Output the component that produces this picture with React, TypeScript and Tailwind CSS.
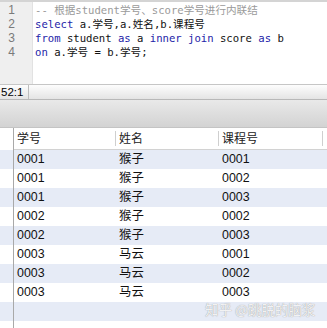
import React from 'react';

const mono = { fontFamily: '"DejaVu Sans Mono", "Noto Sans CJK SC", monospace' };
const sans = { fontFamily: '"Liberation Sans", "Noto Sans CJK SC", sans-serif' };

const K = ({ children }: { children: React.ReactNode }) => (
  <span className="text-[#2323a8]">{children}</span>
);

const rows = [
  ['0001', '猴子', '0001'],
  ['0001', '猴子', '0002'],
  ['0001', '猴子', '0003'],
  ['0002', '猴子', '0002'],
  ['0002', '猴子', '0003'],
  ['0003', '马云', '0001'],
  ['0003', '马云', '0002'],
  ['0003', '马云', '0003'],
  ['', '', ''],
];

const App = () => {
  return (
    <div className="relative w-[327px] h-[328px] overflow-hidden bg-white">
      {/* editor */}
      <div className="h-[84px] flex border-t-2 border-[#d4d4d4]">
        <div
          className="w-[33px] bg-[#efefef] border-r border-[#e2e2e2] pt-[1px] pr-[17px] text-right text-[#7a7a7a] text-[12px] leading-[14px]"
          style={sans}
        >
          <div>1</div>
          <div>2</div>
          <div>3</div>
          <div>4</div>
        </div>
        <div className="flex-1 pl-[2px] pt-[1px] text-[10.6px] leading-[14px] text-[#111] whitespace-pre" style={mono}>
          <div className="text-[#9a9a9a]">-- 根据student学号、score学号进行内联结</div>
          <div>
            <K>select</K> a.学号,a.姓名,b.课程号
          </div>
          <div>
            <K>from</K> student <K>as</K> a <K>inner join</K> score <K>as</K> b
          </div>
          <div>
            <K>on</K> a.学号 = b.学号;
          </div>
        </div>
      </div>

      {/* status bar */}
      <div className="h-[15px] flex border-t border-[#c6c6c6] bg-gradient-to-b from-[#fdfdfd] to-[#e4e4e4]">
        <div className="w-[29px] border-r border-[#bdbdbd] pl-[1px] text-[11.5px] leading-[14px] text-black" style={sans}>
          52:1
        </div>
        <div className="flex-1" />
      </div>

      {/* toolbar band */}
      <div className="h-[29px] border-t border-[#b8b8b8] border-b border-b-[#c4c4c4] bg-gradient-to-b from-[#e9e9e9] to-[#d3d3d3]" />

      {/* result grid */}
      <div className="flex" style={sans}>
        <div className="w-[14px] border-r border-[#a9a9a9] h-[200px]">
          <div className="h-[22px]" />
          {rows.map((_, i) => (
            <div key={i} className={`h-[19px] ${i % 2 === 0 ? 'bg-[#e6ebf6]' : 'bg-white'}`} />
          ))}
        </div>
        <div className="flex-1">
          <div className="h-[22px] flex items-center border-b border-[#d2d2d2] text-[12px] text-[#222]">
            <div className="w-[102px] h-[15px] flex items-center pl-[3px] border-r border-[#cfcfcf]">学号</div>
            <div className="w-[103px] h-[15px] flex items-center pl-[3px] border-r border-[#cfcfcf]">姓名</div>
            <div className="w-[104px] h-[15px] flex items-center pl-[3px] border-r border-[#cfcfcf]">课程号</div>
          </div>
          {rows.map((r, i) => (
            <div
              key={i}
              className={`h-[19px] flex items-center text-[12.4px] text-[#111] ${i % 2 === 0 ? 'bg-[#e6ebf6]' : 'bg-white'}`}
            >
              <div className="w-[102px] pl-[3px]">{r[0]}</div>
              <div className="w-[103px] pl-[3px]">{r[1]}</div>
              <div className="w-[104px] pl-[3px]">{r[2]}</div>
            </div>
          ))}
        </div>
      </div>

      {/* watermark */}
      <div
        className="absolute left-[205px] top-[301px] whitespace-nowrap text-[13.5px] leading-[16px] text-[#f2f2f2] [text-shadow:0_0_1px_#8a8a8a]"
        style={{ fontFamily: '"Noto Sans CJK SC", sans-serif' }}
      >
        知乎 @跳脱的脑浆
      </div>
    </div>
  );
};

export default App;
